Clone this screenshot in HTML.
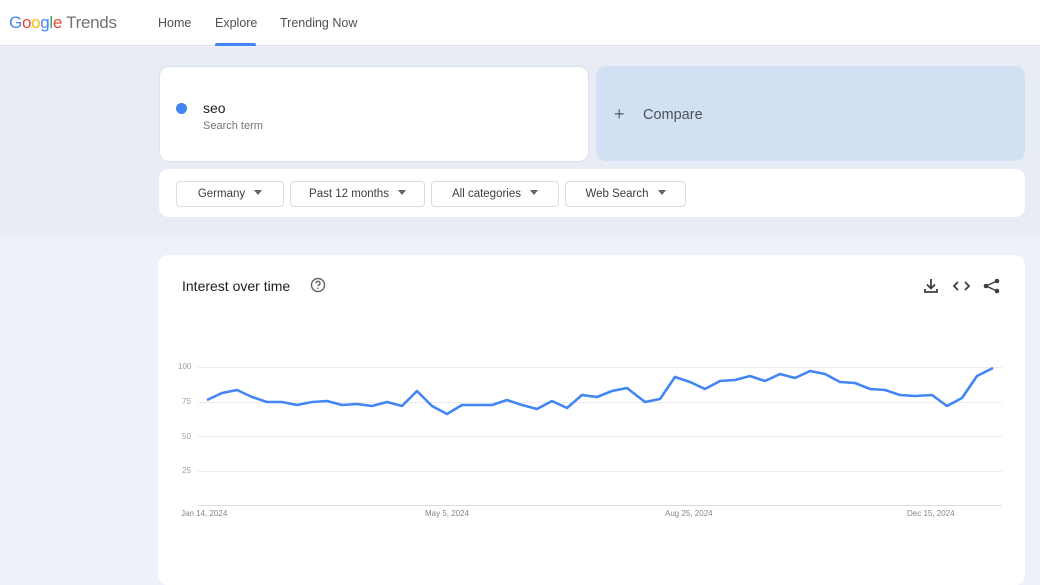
<!DOCTYPE html>
<html><head><meta charset="utf-8"><style>
*{margin:0;padding:0;box-sizing:border-box}
body{width:1040px;height:563px;overflow:hidden;background:#eef1f8;font-family:"Liberation Sans",sans-serif;position:relative}
.hdr{position:absolute;left:0;top:0;width:1040px;height:46px;background:#fff;border-bottom:1px solid #dde1ea}
.logo{position:absolute;left:9px;top:13px;font-size:17px;letter-spacing:-0.3px}
.nav{position:absolute;top:16px;font-size:12.5px;color:#4d5156}
.band{position:absolute;left:0;top:47px;width:1040px;height:190px;background:#e8ecf5}
.card{position:absolute;background:#fff;border-radius:10px}
.btn{position:absolute;top:181px;height:26px;border:1px solid #dadce0;border-radius:4px;font-size:11.5px;color:#3c4043;text-align:center;line-height:24px}
.btn:after{content:"";display:inline-block;margin-left:9px;border-left:4px solid transparent;border-right:4px solid transparent;border-top:5px solid #5f6368;vertical-align:2px}
.yl{position:absolute;font-size:8px;color:#9aa0a6;left:178px}
.xl{position:absolute;font-size:8px;color:#80868b;top:509px}
</style></head><body>
<div class="hdr">
<div class="logo"><span style="color:#4285f4">G</span><span style="color:#ea4335">o</span><span style="color:#fbbc05">o</span><span style="color:#4285f4">g</span><span style="color:#34a853">l</span><span style="color:#ea4335">e</span> <span style="color:#6f7378">Trends</span></div>
<div class="nav" style="left:158px">Home</div>
<div class="nav" style="left:215px">Explore</div>
<div style="position:absolute;left:215px;top:43px;width:41px;height:3px;background:#4285f4;border-radius:2px 2px 0 0"></div>
<div class="nav" style="left:280px">Trending Now</div>
</div>
<div class="band"></div>
<div class="card" style="left:159px;top:66px;width:430px;height:96px;border:1px solid #dde1ea">
<div style="position:absolute;left:16px;top:36px;width:11px;height:11px;border-radius:50%;background:#4285f4"></div>
<div style="position:absolute;left:43px;top:33px;font-size:14px;color:#202124">seo</div>
<div style="position:absolute;left:43px;top:53px;font-size:11px;color:#70757a">Search term</div>
</div>
<div class="card" style="left:596px;top:66px;width:429px;height:95px;background:#d2e0f3">
<div style="position:absolute;left:18px;top:39px;font-size:18px;color:#5f6368;line-height:18px">+</div>
<div style="position:absolute;left:47px;top:41px;font-size:14.5px;color:#4d5156">Compare</div>
</div>
<div class="card" style="left:159px;top:169px;width:866px;height:48px"></div>
<div class="btn" style="left:176px;width:108px">Germany</div>
<div class="btn" style="left:290px;width:135px">Past 12 months</div>
<div class="btn" style="left:431px;width:128px">All categories</div>
<div class="btn" style="left:565px;width:121px">Web Search</div>
<div class="card" style="left:158px;top:255px;width:867px;height:330px"></div>
<div style="position:absolute;left:182px;top:278px;font-size:14px;color:#202124">Interest over time</div>
<svg style="position:absolute;left:310px;top:277px" width="16" height="16" viewBox="0 0 16 16"><circle cx="8" cy="8" r="6.5" fill="none" stroke="#5f6368" stroke-width="1.4"/><path d="M6 6.3a2 2 0 1 1 2.6 1.9c-.5.2-.6.5-.6 1.1" fill="none" stroke="#5f6368" stroke-width="1.3"/><circle cx="8" cy="11.3" r=".8" fill="#5f6368"/></svg>
<svg style="position:absolute;left:920px;top:277px" width="90" height="18" viewBox="0 0 90 18"><path d="M11 2v9M7 7.5l4 4 4-4M5 12v3h12v-3" fill="none" stroke="#3c4043" stroke-width="1.8"/><path d="M38 5l-4 4 4 4M45 5l4 4-4 4" fill="none" stroke="#3c4043" stroke-width="1.8"/><circle cx="77" cy="4" r="2.3" fill="#3c4043"/><circle cx="66" cy="9" r="2.3" fill="#3c4043"/><circle cx="77" cy="14" r="2.3" fill="#3c4043"/><path d="M77 4L66 9l11 5" fill="none" stroke="#3c4043" stroke-width="1.5"/></svg>
<svg style="position:absolute;left:0;top:0" width="1040" height="563">
<g stroke="#ececec" stroke-width="1"><line x1="198" y1="367.5" x2="1002" y2="367.5"/><line x1="198" y1="402.5" x2="1002" y2="402.5"/><line x1="198" y1="436.5" x2="1002" y2="436.5"/><line x1="198" y1="471.5" x2="1002" y2="471.5"/></g>
<line x1="198" y1="505.5" x2="1002" y2="505.5" stroke="#dadce0"/>
<polyline fill="none" stroke="#4285f4" stroke-width="2.6" stroke-linejoin="round" points="207,400 222,393 237,390 252,397 267,402 282,402 297,405 312,402 327,401 342,405 357,404 372,406 387,402 402,406 417,391 432,406 447,414 462,405 477,405 492,405 507,400 522,405 537,409 552,401 567,408 582,395 597,397 612,391 627,388 645,402 660,399 675,377 690,382 705,389 720,381 735,380 750,376 765,381 780,374 795,378 810,371 825,374 840,382 855,383 870,389 885,390 900,395 915,396 932,395 947,406 962,398 977,376 993,368"/>
</svg>
<div class="yl" style="top:362px">100</div>
<div class="yl" style="top:397px;left:182px">75</div>
<div class="yl" style="top:432px;left:182px">50</div>
<div class="yl" style="top:466px;left:182px">25</div>
<div class="xl" style="left:181px">Jan 14, 2024</div>
<div class="xl" style="left:425px">May 5, 2024</div>
<div class="xl" style="left:665px">Aug 25, 2024</div>
<div class="xl" style="left:907px">Dec 15, 2024</div>
</body></html>
